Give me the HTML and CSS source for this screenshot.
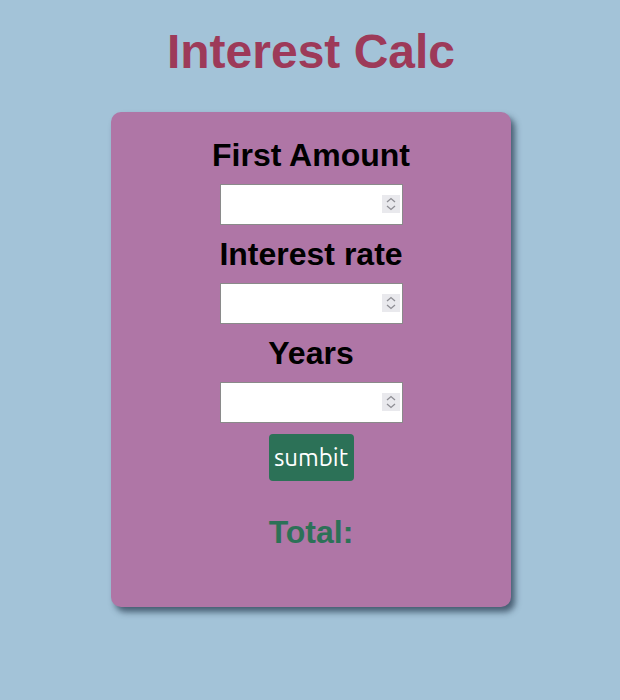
FILE: index.html
```html
<!DOCTYPE html>
<html lang="en">
<head>
<meta charset="utf-8">
<title>Interest Calc</title>
<link rel="stylesheet" href="styles.css">
</head>
<body>
<h1 class="title">Interest Calc</h1>
<main class="card">
  <label class="label" for="amount">First Amount</label>
  <span class="wrap">
    <input class="field" id="amount" type="number">
    <span class="spin" aria-hidden="true"><svg width="18" height="18" viewBox="0 0 18 18"><path d="M5 7 L9 3.5 L13 7 M5 11 L9 14.5 L13 11" fill="none" stroke="#8e8e94" stroke-width="1.3"/></svg></span>
  </span>
  <label class="label" for="rate">Interest rate</label>
  <span class="wrap">
    <input class="field" id="rate" type="number">
    <span class="spin" aria-hidden="true"><svg width="18" height="18" viewBox="0 0 18 18"><path d="M5 7 L9 3.5 L13 7 M5 11 L9 14.5 L13 11" fill="none" stroke="#8e8e94" stroke-width="1.3"/></svg></span>
  </span>
  <label class="label" for="years">Years</label>
  <span class="wrap">
    <input class="field" id="years" type="number">
    <span class="spin" aria-hidden="true"><svg width="18" height="18" viewBox="0 0 18 18"><path d="M5 7 L9 3.5 L13 7 M5 11 L9 14.5 L13 11" fill="none" stroke="#8e8e94" stroke-width="1.3"/></svg></span>
  </span>
  <button class="btn" type="button">sumbit</button>
  <h2 class="total">Total:</h2>
</main>
</body>
</html>
```
FILE: styles.css
```css
html, body {
  margin: 0;
  padding: 0;
}
body {
  background: #a3c3d8;
  font-family: "Liberation Sans", Arial, sans-serif;
  min-height: 700px;
  display: flex;
  flex-direction: column;
  align-items: center;
  padding-left: 2px;
  box-sizing: border-box;
}
.title {
  margin: 24px 0 0;
  height: 88px;
  font-size: 48px;
  line-height: 56px;
  font-weight: bold;
  color: #9d3a59;
  text-align: center;
}
.card {
  box-sizing: border-box;
  width: 400px;
  height: 495px;
  background: #af76a6;
  border-radius: 10px;
  box-shadow: 4px 5px 6px rgba(40, 60, 80, 0.75);
  display: flex;
  flex-direction: column;
  align-items: center;
  padding-top: 25px;
}
.label {
  display: block;
  font-size: 32px;
  font-weight: bold;
  line-height: 37px;
  color: #000;
  margin-bottom: 10px;
}
.wrap {
  position: relative;
  display: block;
  width: 183px;
  height: 41px;
  margin-bottom: 11px;
}
.field {
  box-sizing: border-box;
  display: block;
  width: 183px;
  height: 41px;
  margin: 0;
  border: 1px solid #8a8a8a;
  background: #fff;
  font-size: 20px;
  padding: 2px 4px;
}
.field::-webkit-inner-spin-button,
.field::-webkit-outer-spin-button {
  -webkit-appearance: none;
  margin: 0;
}
.spin {
  position: absolute;
  right: 3px;
  top: 11px;
  width: 18px;
  height: 18px;
  background: #e9e9ed;
  display: block;
}
.spin svg {
  display: block;
}
.btn {
  box-sizing: border-box;
  width: 85px;
  height: 47px;
  margin-top: 0;
  border: none;
  border-radius: 4px;
  background: #2c7157;
  color: #fff;
  font-family: "Ubuntu", "Open Sans", sans-serif;
  font-size: 24px;
  padding: 0;
}
.total {
  margin: 33px 0 0;
  font-size: 32px;
  line-height: 37px;
  font-weight: bold;
  color: #2c7157;
}
```
